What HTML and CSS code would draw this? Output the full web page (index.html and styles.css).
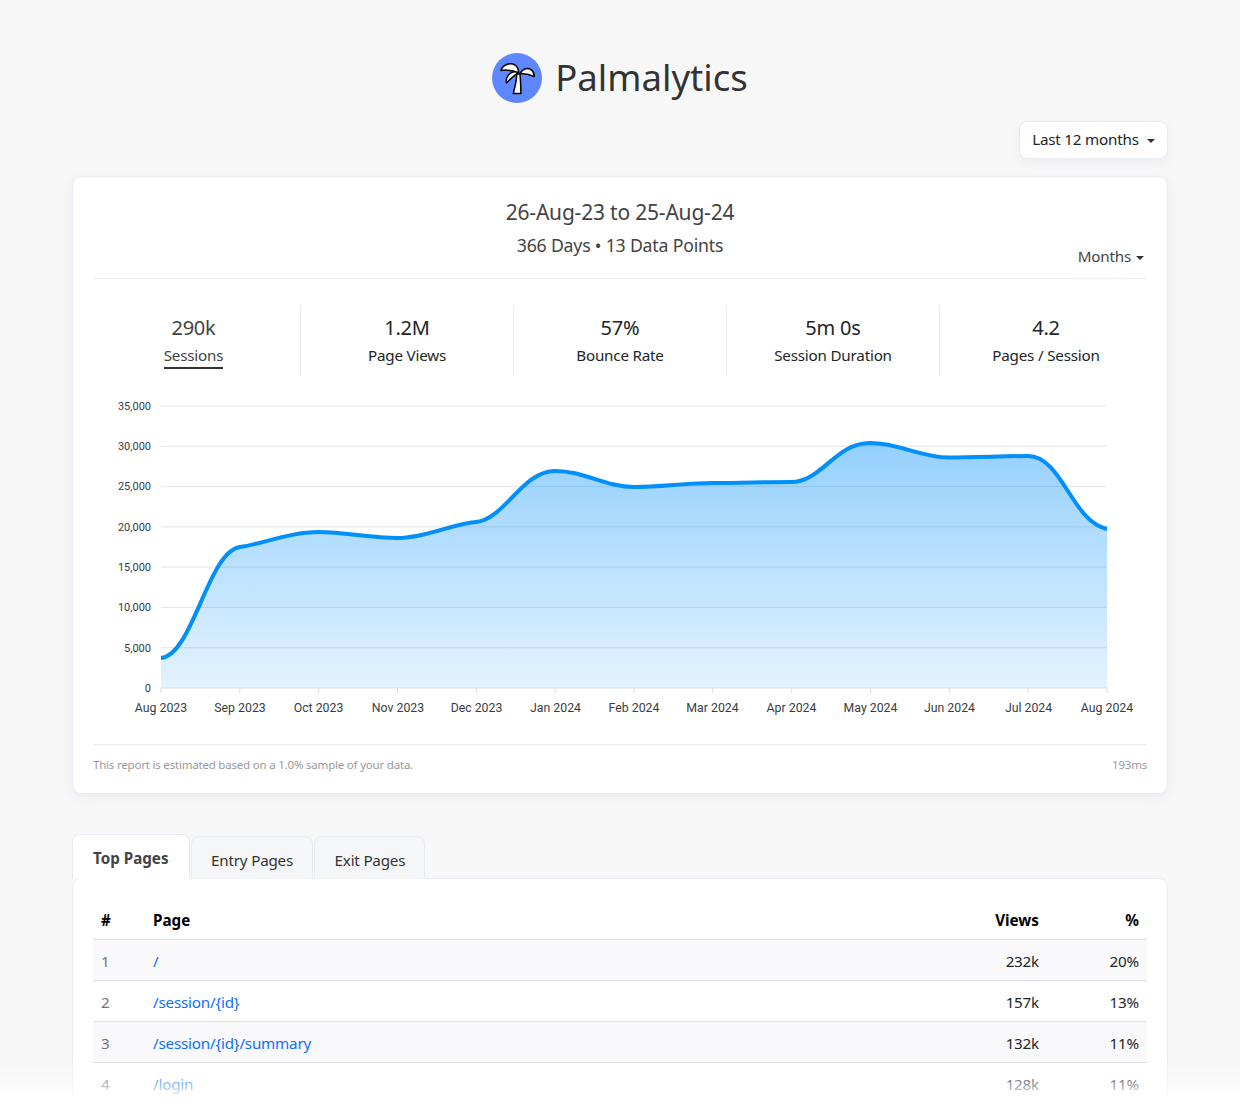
FILE: index.html
```html
<!doctype html>
<html lang="en">
<head>
    <meta charset="utf-8" />
    <link rel="stylesheet" href="styles.css">
    <title>Palmalytics</title>
</head>
<body>
    <header class="brand">
        <svg class="brand-logo" viewBox="0 0 50 50" width="50" height="50">
            <circle cx="25" cy="25" r="25" fill="#5f87ff"/>
            <g fill="#fff" stroke="#000" stroke-width="1.5" stroke-linejoin="round">
                <path d="M21.3 40.5C23 34 24.6 28 24.8 21L28 21C28.6 28 28.9 35 28.9 40.5Z"/>
                <path d="M14.6 30C13 24 18 17.600 26.4 18.600C23 23 18 25.500 14.600 30Z"/>
                <path d="M9 17.600C10.200 12 18 9 22.800 11.800C25.200 13.200 26.400 16 26.800 19.600C21.500 17.800 14.500 16.400 9 17.600Z"/>
                <path d="M28.300 20.800C30.200 15.400 36.600 14 40 17.400C41.400 18.800 42.200 21 42.200 23.600C38 21.400 33 20.200 28.300 20.800Z"/>
            </g>
        </svg>
        <h1 class="brand-name">Palmalytics</h1>
    </header>

    <div class="toolbar">
        <button class="range-btn">Last 12 months<i class="caret"></i></button>
    </div>

    <section class="card report">
        <div class="report-head">
            <div class="report-titles">
                <div class="report-date">26-Aug-23 to 25-Aug-24</div>
                <div class="report-sub">366 Days • 13 Data Points</div>
            </div>
            <div class="interval">Months<i class="caret"></i></div>
        </div>

        <ul class="stats">
            <li class="stat active"><b>290k</b><span>Sessions</span></li>
            <li class="stat"><b>1.2M</b><span>Page Views</span></li>
            <li class="stat"><b>57%</b><span>Bounce Rate</span></li>
            <li class="stat"><b>5m 0s</b><span>Session Duration</span></li>
            <li class="stat"><b>4.2</b><span>Pages / Session</span></li>
        </ul>

        <svg class="chart" viewBox="93 385 1054 350" width="1054" height="350">
            <defs>
                <linearGradient id="area" x1="0" y1="0" x2="0" y2="1">
                    <stop offset="0" stop-color="#008ffb" stop-opacity=".42"/>
                    <stop offset="1" stop-color="#008ffb" stop-opacity=".11"/>
                </linearGradient>
            </defs>
            <g class="grid">
                <path d="M161 406H1107M161 446.300H1107M161 486.600H1107M161 526.900H1107M161 567.100H1107M161 607.400H1107M161 647.700H1107"/>
            </g>
            <path fill="url(#area)" d="M161,658C193,655 208,551 240,547C262,544 290,532 318.7,532C345,532 370,538 397.5,538C425,538 452,524 476,522C505,519 522,471 555,471C585,471 605,487 634,487C662,487 685,483 713,483C740,483 765,482 791,482C822,482 835,443 870,443C900,443 920,457.5 949,457.5C975,457.5 1005,456 1028,456C1062,456 1072,522 1107,529L1107,688L161,688Z"/>
            <path class="axis" d="M161 688H1107M161 688v5M239.800 688v5M318.700 688v5M397.500 688v5M476.300 688v5M555.200 688v5M634 688v5M712.800 688v5M791.700 688v5M870.500 688v5M949.300 688v5M1028.200 688v5M1107 688v5"/>
            <path class="line" d="M161,658C193,655 208,551 240,547C262,544 290,532 318.7,532C345,532 370,538 397.5,538C425,538 452,524 476,522C505,519 522,471 555,471C585,471 605,487 634,487C662,487 685,483 713,483C740,483 765,482 791,482C822,482 835,443 870,443C900,443 920,457.5 949,457.5C975,457.5 1005,456 1028,456C1062,456 1072,522 1107,529"/>
            <g class="y-labels">
                <text x="151" y="410">35,000</text>
                <text x="151" y="450">30,000</text>
                <text x="151" y="490">25,000</text>
                <text x="151" y="531">20,000</text>
                <text x="151" y="571">15,000</text>
                <text x="151" y="611">10,000</text>
                <text x="151" y="652">5,000</text>
                <text x="151" y="692">0</text>
            </g>
            <g class="x-labels">
                <text x="161" y="712">Aug 2023</text>
                <text x="240" y="712">Sep 2023</text>
                <text x="318.500" y="712">Oct 2023</text>
                <text x="398" y="712">Nov 2023</text>
                <text x="476.500" y="712">Dec 2023</text>
                <text x="555.500" y="712">Jan 2024</text>
                <text x="634" y="712">Feb 2024</text>
                <text x="712.500" y="712">Mar 2024</text>
                <text x="791.500" y="712">Apr 2024</text>
                <text x="870.500" y="712">May 2024</text>
                <text x="949.500" y="712">Jun 2024</text>
                <text x="1028.500" y="712">Jul 2024</text>
                <text x="1107" y="712">Aug 2024</text>
            </g>
        </svg>

        <footer class="report-foot">
            <span>This report is estimated based on a 1.0% sample of your data.</span>
            <span>193ms</span>
        </footer>
    </section>

    <nav class="tabs">
        <a class="tab active">Top Pages</a>
        <a class="tab">Entry Pages</a>
        <a class="tab">Exit Pages</a>
    </nav>
    <section class="card pages">
        <table class="pages-table">
            <thead>
                <tr><th class="col-rank">#</th><th>Page</th><th class="num">Views</th><th class="num col-pct">%</th></tr>
            </thead>
            <tbody>
                <tr><td class="col-rank">1</td><td><a>/</a></td><td class="num">232k</td><td class="num">20%</td></tr>
                <tr><td class="col-rank">2</td><td><a>/session/{id}</a></td><td class="num">157k</td><td class="num">13%</td></tr>
                <tr><td class="col-rank">3</td><td><a>/session/{id}/summary</a></td><td class="num">132k</td><td class="num">11%</td></tr>
                <tr><td class="col-rank">4</td><td><a>/login</a></td><td class="num">128k</td><td class="num">11%</td></tr>
            </tbody>
        </table>
    </section>

    <div class="fade"></div>
</body>
</html>
```

FILE: styles.css
```css
html, body {
    height: 100%;
    overflow: hidden;
}
body {
    margin: 0;
    padding: 53px 72px 0;
    box-sizing: border-box;
    background: #f7f7f8;
    color: #212529;
    font-family: "Noto Sans", "Open Sans", sans-serif;
    font-size: 15.2px;
    letter-spacing: -.2px;
}
.brand {
    display: flex;
    justify-content: center;
    align-items: center;
    gap: 13px;
    height: 50px;
}
.brand-name {
    margin: -3px 0 0;
    font-size: 36.600px;
    font-weight: 400;
    letter-spacing: 0;
    color: #333;
}
.toolbar {
    display: flex;
    justify-content: flex-end;
    margin-top: 18px;
}
.range-btn {
    height: 38px;
    width: 149px;
    padding: 0 0 2px;
    font: inherit;
    letter-spacing: inherit;
    color: #212529;
    background: #fff;
    border: 1px solid #e9ebf2;
    border-radius: 8px;
    box-shadow: 0 4px 10px rgba(40, 50, 90, .05);
}
.caret {
    display: inline-block;
    margin-left: 8px;
    vertical-align: 2px;
    border-top: 4px solid #333;
    border-left: 4px solid transparent;
    border-right: 4px solid transparent;
}
.card {
    background: #fff;
    border: 1px solid #e9ebf2;
    border-radius: 8px;
    box-sizing: border-box;
    padding: 0 20px;
}
.report {
    margin-top: 17px;
    height: 618px;
    box-shadow: 0 4px 12px rgba(40, 50, 90, .05);
}
.report-head {
    display: flex;
    justify-content: center;
    height: 102px;
    border-bottom: 1px solid #ebebef;
    box-sizing: border-box;
    position: relative;
}
.report-titles {
    text-align: center;
    padding-top: 21px;
}
.report-date {
    font-size: 21px;
    line-height: 28px;
    color: #444;
}
.report-sub {
    font-size: 17.700px;
    line-height: 30px;
    margin-top: 4px;
    color: #444;
}
.interval {
    position: absolute;
    right: 3px;
    top: 68px;
    line-height: 22px;
    color: #444;
}
.interval .caret {
    margin-left: 5px;
}
.stats {
    display: grid;
    grid-template-columns: repeat(5, 1fr);
    list-style: none;
    margin: 26px -5px 0 -6px;
    padding: 0;
    height: 71px;
}
.stat {
    display: flex;
    flex-direction: column;
    align-items: center;
    box-sizing: border-box;
    border-left: 1px solid #ebebef;
    color: #212529;
}
.stat:first-child {
    border-left: 0;
}
.stat b {
    font-weight: 400;
    font-size: 20px;
    line-height: 28px;
    margin-top: 9px;
}
.stat span {
    line-height: 22px;
    height: 22px;
    margin-top: 2px;
}
.stat.active {
    color: #444;
}
.stat.active span {
    border-bottom: 2px solid #333;
    padding-bottom: 1px;
}
.chart {
    display: block;
    margin-top: 9px;
}
.grid path {
    fill: none;
    stroke: #e4e4e4;
    stroke-width: 1;
}
.axis {
    fill: none;
    stroke: #d8dde3;
    stroke-width: 1;
}
.line {
    fill: none;
    stroke: #008ffb;
    stroke-width: 4;
}
.chart text {
    font-family: Roboto, "Liberation Sans", sans-serif;
    letter-spacing: 0;
    fill: #373d3f;
}
.y-labels text {
    font-size: 11px;
    text-anchor: end;
}
.x-labels text {
    font-size: 12.300px;
    text-anchor: middle;
}
.report-foot {
    display: flex;
    justify-content: space-between;
    margin-top: 9px;
    padding-top: 12px;
    border-top: 1px solid #ebebef;
    font-size: 11.500px;
    line-height: 16px;
    color: #999;
}
.tabs {
    display: flex;
    align-items: flex-end;
    gap: 1px;
    margin-top: 40px;
    height: 45px;
    position: relative;
    z-index: 1;
}
.tab {
    box-sizing: border-box;
    height: 43px;
    padding: 11px 19px 0 19.500px;
    line-height: 24px;
    color: #333;
    background: #f5f6f8;
    border: 1px solid #e9ebf2;
    border-bottom: 0;
    border-radius: 8px 8px 0 0;
}
.tab.active {
    height: 45px;
    padding: 11px 20px 0 20px;
    background: #fff;
    color: #444;
    font-weight: 700;
    letter-spacing: 0;
}
.pages {
    margin-top: -1px;
    height: 400px;
    padding-top: 21px;
}
.pages-table {
    width: 100%;
    border-collapse: collapse;
}
.pages-table th {
    text-align: left;
    color: #000;
    font-weight: 700;
    letter-spacing: 0;
    height: 39px;
    padding: 0 8px;
    border-bottom: 1px solid #dfe1e6;
}
.pages-table td {
    height: 39px;
    padding: 1px 8px 0;
    border-bottom: 1px solid #dfe1e6;
}
.pages-table tbody tr:nth-child(odd) td {
    background: #f9f9fc;
}
.pages-table tbody tr:last-child td {
    border-bottom: 0;
}
.pages-table a {
    color: #0d6efd;
}
.pages-table .num {
    text-align: right;
}
.col-rank {
    width: 36px;
}
td.col-rank {
    color: #6c757d;
}
.col-pct {
    width: 84px;
}
.fade {
    position: fixed;
    left: 0;
    right: 0;
    bottom: 20px;
    height: 40px;
    background: linear-gradient(rgba(255, 255, 255, 0), rgba(255, 255, 255, .5) 60%, #fff);
    box-shadow: 0 20px 0 #fff;
}
```
